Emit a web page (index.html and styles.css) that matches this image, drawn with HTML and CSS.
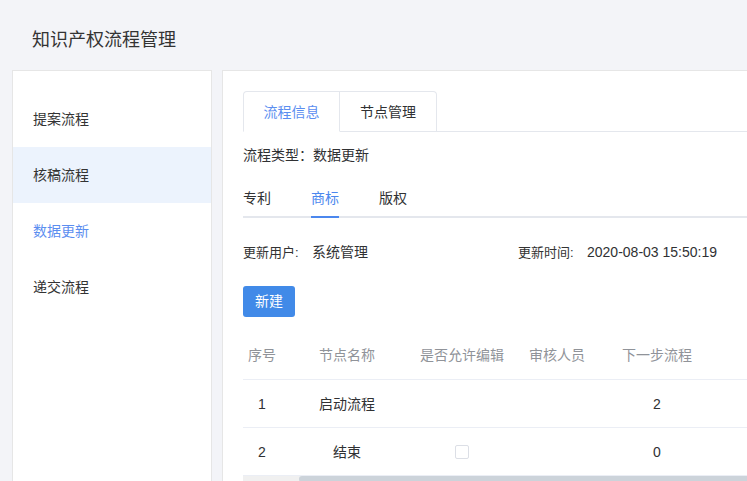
FILE: index.html
```html
<!DOCTYPE html>
<html lang="zh">
<head>
<meta charset="utf-8">
<title>知识产权流程管理</title>
<link rel="stylesheet" href="styles.css">
</head>
<body>
<header class="page-header">知识产权流程管理</header>
<main class="layout">
  <nav class="sidebar">
    <div class="menu-item">提案流程</div>
    <div class="menu-item is-hover">核稿流程</div>
    <div class="menu-item is-active">数据更新</div>
    <div class="menu-item">递交流程</div>
  </nav>
  <section class="content">
    <div class="card-tabs">
      <div class="card-tab is-active">流程信息</div>
      <div class="card-tab">节点管理</div>
    </div>
    <div class="flow-type">流程类型：数据更新</div>
    <div class="sub-tabs">
      <div class="sub-tab">专利</div>
      <div class="sub-tab is-active">商标</div>
      <div class="sub-tab">版权</div>
    </div>
    <div class="info-row">
      <div class="info"><span class="info-label">更新用户:</span><span class="info-value">系统管理</span></div>
      <div class="info"><span class="info-label">更新时间:</span><span class="info-value num">2020-08-03 15:50:19</span></div>
    </div>
    <button class="btn-primary">新建</button>
    <div class="table">
      <div class="tr th">
        <div class="td">序号</div>
        <div class="td">节点名称</div>
        <div class="td">是否允许编辑</div>
        <div class="td">审核人员</div>
        <div class="td">下一步流程</div>
        <div class="td"></div>
      </div>
      <div class="tr">
        <div class="td num">1</div>
        <div class="td">启动流程</div>
        <div class="td"></div>
        <div class="td"></div>
        <div class="td num">2</div>
        <div class="td"></div>
      </div>
      <div class="tr">
        <div class="td num">2</div>
        <div class="td">结束</div>
        <div class="td"><span class="checkbox"></span></div>
        <div class="td"></div>
        <div class="td num">0</div>
        <div class="td"></div>
      </div>
      <div class="scrollbar"><div class="scroll-thumb"></div></div>
    </div>
  </section>
</main>
</body>
</html>
```
FILE: styles.css
```css
html, body {
  margin: 0;
  padding: 0;
  height: 100%;
  overflow: hidden;
}
body {
  background: #f3f4f8;
  font-family: "Liberation Sans", "Noto Sans CJK SC", sans-serif;
  font-size: 14px;
  color: #333;
}
.page-header {
  height: 70px;
  box-sizing: border-box;
  padding: 28px 0 0 32px;
  font-size: 18px;
  line-height: 24px;
  color: #333;
}
.layout {
  display: flex;
  gap: 10px;
  padding-left: 12px;
  height: 420px;
}
.sidebar {
  width: 200px;
  flex: none;
  box-sizing: border-box;
  background: #fff;
  border: 1px solid #e6e6e6;
  border-bottom: none;
  padding-top: 20px;
}
.menu-item {
  height: 56px;
  line-height: 56px;
  padding-left: 20px;
  color: #333;
}
.menu-item.is-hover {
  background: #ecf3fd;
}
.menu-item.is-active {
  color: #5b8ef0;
}
.content {
  width: 640px;
  flex: none;
  box-sizing: border-box;
  background: #fff;
  border: 1px solid #e6e6e6;
  border-bottom: none;
  padding: 20px 0 0 20px;
}
.card-tabs {
  display: flex;
  height: 41px;
  box-sizing: border-box;
  border-bottom: 1px solid #e4e7ed;
}
.card-tab {
  width: 97px;
  height: 41px;
  box-sizing: border-box;
  text-align: center;
  line-height: 40px;
  border: 1px solid #e4e7ed;
  border-left: none;
  color: #303133;
}
.card-tab:first-child {
  border-left: 1px solid #e4e7ed;
  border-top-left-radius: 4px;
}
.card-tab:last-child {
  border-top-right-radius: 4px;
}
.card-tab.is-active {
  color: #5b8ef0;
  border-bottom-color: #fff;
}
.flow-type {
  margin-top: 13px;
  line-height: 20px;
  color: #303133;
}
.sub-tabs {
  display: flex;
  margin-top: 13px;
  height: 40px;
  box-sizing: border-box;
  border-bottom: 2px solid #e4e7ed;
}
.sub-tab {
  padding: 0 20px;
  height: 38px;
  line-height: 40px;
  color: #303133;
}
.sub-tab:first-child {
  padding-left: 0;
}
.sub-tab.is-active {
  color: #4b87ee;
  background: linear-gradient(#4b87ee, #4b87ee) no-repeat;
  background-size: calc(100% - 40px) 2px;
  background-position: 20px 100%;
  margin-bottom: -2px;
  padding-bottom: 2px;
}
.info-row {
  display: grid;
  grid-template-columns: 275px auto;
  margin-top: 24px;
  line-height: 20px;
}
.info-label {
  display: inline-block;
  width: 69px;
  font-size: 13px;
  color: #333;
}
.info-value {
  color: #303133;
}
.btn-primary {
  display: block;
  margin-top: 23px;
  width: 52px;
  height: 31px;
  padding: 0;
  border: none;
  border-radius: 3px;
  background: #418ae8;
  color: #fff;
  font-family: inherit;
  font-size: 14px;
  line-height: 31px;
}
.table {
  margin-top: 14px;
}
.tr {
  display: grid;
  grid-template-columns: 38px 132px 98px 92px 108px 1fr;
  height: 48px;
  box-sizing: border-box;
  border-bottom: 1px solid #ebeef5;
  color: #303133;
}
.tr.th {
  height: 49px;
  color: #909399;
}
.td {
  display: flex;
  align-items: center;
  justify-content: center;
  line-height: 20px;
}
.checkbox {
  display: block;
  width: 12px;
  height: 12px;
  border: 1px solid #dcdfe6;
  border-radius: 2px;
  background: #fff;
}
.scrollbar {
  height: 6px;
  background: #f0f0f0;
  display: flex;
}
.scroll-thumb {
  margin-left: 56px;
  flex: 1;
  background: #ccd3da;
  border-radius: 3px 0 0 3px;
}
```
